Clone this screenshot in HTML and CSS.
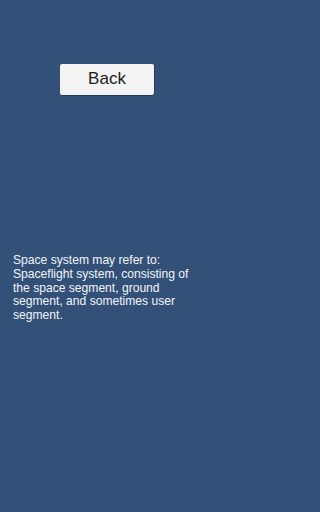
FILE: index.html
```html
<!DOCTYPE html>
<html>
<head>
<meta charset="utf-8">
<link rel="stylesheet" href="styles.css">
</head>
<body>
<div class="screen">
  <div class="top">
    <button class="back">Back</button>
  </div>
  <p class="desc">Space system may refer to: Spaceflight system, consisting of the space segment, ground segment, and sometimes user segment.</p>
</div>
</body>
</html>
```
FILE: styles.css
```css
html, body {
  margin: 0;
  padding: 0;
  background: #335078;
}
.screen {
  width: 230px;
  height: 512px;
  display: flex;
  flex-direction: column;
  font-family: "Liberation Sans", Arial, sans-serif;
}
.top {
  padding: 64px 0 0 60px;
  display: flex;
}
.back {
  width: 94px;
  height: 31px;
  margin: 0;
  padding: 0 0 1px;
  border: none;
  border-radius: 2px;
  background: #f4f4f4;
  box-shadow: 1px 1px 0 #1f3a66;
  font-family: "Liberation Sans", Arial, sans-serif;
  font-size: 17px;
  color: #202020;
}
.desc {
  margin: 159px 0 0 13px;
  width: 190px;
  font-size: 12.1px;
  line-height: 13.8px;
  color: #f2f4f8;
}
```
